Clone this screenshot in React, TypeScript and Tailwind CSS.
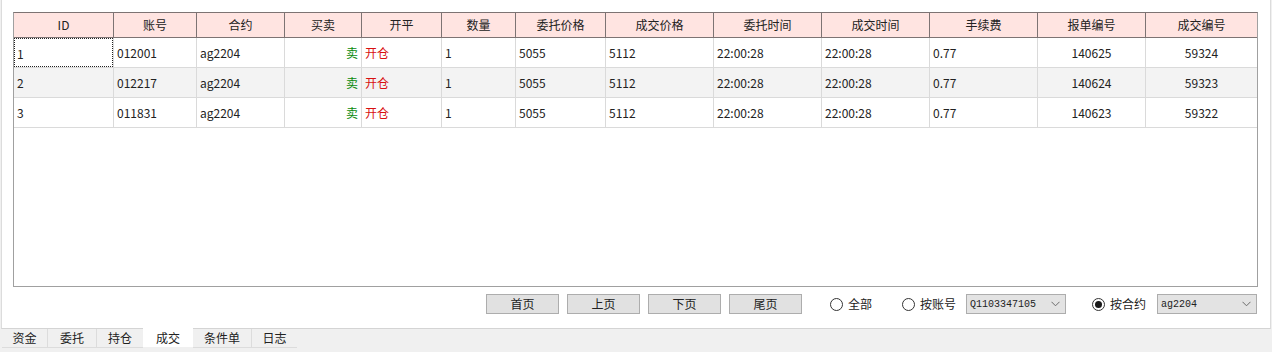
import React from 'react';

const FONT = "font-['Microsoft_YaHei','Noto_Sans_CJK_SC',sans-serif]";

// column widths incl. right divider
const COLUMNS = [
  { title: 'ID', width: 'w-[100px]', align: 'text-left' },
  { title: '账号', width: 'w-[83px]', align: 'text-left' },
  { title: '合约', width: 'w-[88px]', align: 'text-left' },
  { title: '买卖', width: 'w-[77px]', align: 'text-right' },
  { title: '开平', width: 'w-[80px]', align: 'text-left' },
  { title: '数量', width: 'w-[74px]', align: 'text-left' },
  { title: '委托价格', width: 'w-[90px]', align: 'text-left' },
  { title: '成交价格', width: 'w-[108px]', align: 'text-left' },
  { title: '委托时间', width: 'w-[108px]', align: 'text-left' },
  { title: '成交时间', width: 'w-[108px]', align: 'text-left' },
  { title: '手续费', width: 'w-[108px]', align: 'text-left' },
  { title: '报单编号', width: 'w-[108px]', align: 'text-center' },
  { title: '成交编号', width: 'w-[111px]', align: 'text-center' },
];

const ROWS = [
  ['1', '012001', 'ag2204', '卖', '开仓', '1', '5055', '5112', '22:00:28', '22:00:28', '0.77', '140625', '59324'],
  ['2', '012217', 'ag2204', '卖', '开仓', '1', '5055', '5112', '22:00:28', '22:00:28', '0.77', '140624', '59323'],
  ['3', '011831', 'ag2204', '卖', '开仓', '1', '5055', '5112', '22:00:28', '22:00:28', '0.77', '140623', '59322'],
];

const TABS = [
  { name: '资金', width: 'w-[46px]' },
  { name: '委托', width: 'w-[49px]' },
  { name: '持仓', width: 'w-[46px]' },
  { name: '成交', width: 'w-[50px]', active: true },
  { name: '条件单', width: 'w-[59px]' },
  { name: '日志', width: 'w-[45px]' },
];

const Radio: React.FC<{ label: string; checked?: boolean }> = ({ label, checked }) => (
  <div className="flex items-center">
    <span className="w-[13px] h-[13px] rounded-full border border-[#333] bg-white flex items-center justify-center">
      {checked && <span className="w-[7px] h-[7px] rounded-full bg-[#1a1a1a]" />}
    </span>
    <span className="ml-[5px] text-[12px] text-[#222]">{label}</span>
  </div>
);

const Combo: React.FC<{ value: string }> = ({ value }) => (
  <div className="w-[100px] h-[20px] bg-[#e3e3e3] border border-[#adadad] flex items-center justify-between pl-[3px] pr-[5px]">
    <span className="font-['Liberation_Mono',monospace] text-[10px] text-[#222]">{value}</span>
    <svg width="9" height="6" viewBox="0 0 9 6">
      <path d="M0.5 0.8 L4.5 4.8 L8.5 0.8" fill="none" stroke="#6b6b6b" strokeWidth="1" />
    </svg>
  </div>
);

const App: React.FC = () => {
  return (
    <div className={`w-[1272px] h-[352px] bg-[#f0f0f0] flex flex-col ${FONT}`}>
      <div className="h-[329px] mx-[1px] bg-white border-x border-[#dcdcdc] border-b border-b-[#d4d4d4] pt-[12px] pl-[11px]">
        {/* grid */}
        <div className="w-[1245px] h-[275px] border border-[#a0a0a0] border-t-[#7d7373] bg-white">
          <div className="flex h-[25px] bg-[#ffe4e1] border-b border-[#7d7373]">
            {COLUMNS.map((col, i) => (
              <div
                key={col.title}
                className={`${col.width} h-full flex items-center justify-center text-[12px] text-[#222] ${
                  i < COLUMNS.length - 1 ? 'border-r border-[#7d7373]' : ''
                }`}
              >
                {col.title}
              </div>
            ))}
          </div>
          {ROWS.map((row, r) => (
            <div key={r} className={`flex h-[30px] border-b border-[#dadada] ${r === 1 ? 'bg-[#f3f3f3]' : 'bg-white'}`}>
              {row.map((cell, c) => {
                const col = COLUMNS[c];
                let color = 'text-[#222]';
                if (c === 3) color = 'text-[#0a8a0a]';
                if (c === 4) color = 'text-[#d81010]';
                return (
                  <div
                    key={c}
                    className={`${col.width} h-full text-[12px] leading-[29px] px-[3px] ${col.align} ${color} ${
                      c < row.length - 1 ? 'border-r border-[#dadada]' : ''
                    }`}
                  >
                    {r === 0 && c === 0 ? (
                      <div className="h-[29px] -mx-[3px] px-[2px] border border-dotted border-[#222]">
                        <span className="leading-[27px]">{cell}</span>
                      </div>
                    ) : (
                      cell
                    )}
                  </div>
                );
              })}
            </div>
          ))}
        </div>

        {/* paging + filter */}
        <div className="flex items-center mt-[7px] ml-[473px] h-[20px]">
          {['首页', '上页', '下页', '尾页'].map((b, i) => (
            <div
              key={b}
              className={`w-[73px] h-[20px] bg-[#e1e1e1] border border-[#adadad] flex items-center justify-center text-[12px] text-[#222] ${
                i > 0 ? 'ml-[8px]' : ''
              }`}
            >
              {b}
            </div>
          ))}
          <div className="ml-[28px]">
            <Radio label="全部" />
          </div>
          <div className="ml-[30px]">
            <Radio label="按账号" />
          </div>
          <div className="ml-[10px]">
            <Combo value="Q1103347105" />
          </div>
          <div className="ml-[26px]">
            <Radio label="按合约" checked />
          </div>
          <div className="ml-[11px]">
            <Combo value="ag2204" />
          </div>
        </div>
      </div>

      {/* bottom tabs */}
      <div className="flex h-[19px] pl-[2px]">
        {TABS.map((t, i) => (
          <div
            key={t.name}
            className={`${t.width} h-full flex items-center justify-center text-[12px] text-[#222] ${
              t.active ? 'bg-white -mt-[1px] h-[20px]' : 'bg-[#f0f0f0] border-b border-[#dcdcdc]'
            } ${i < TABS.length - 1 && !t.active && !TABS[i + 1].active ? 'border-r border-[#dcdcdc]' : ''}`}
          >
            {t.name}
          </div>
        ))}
      </div>
    </div>
  );
};

export default App;
